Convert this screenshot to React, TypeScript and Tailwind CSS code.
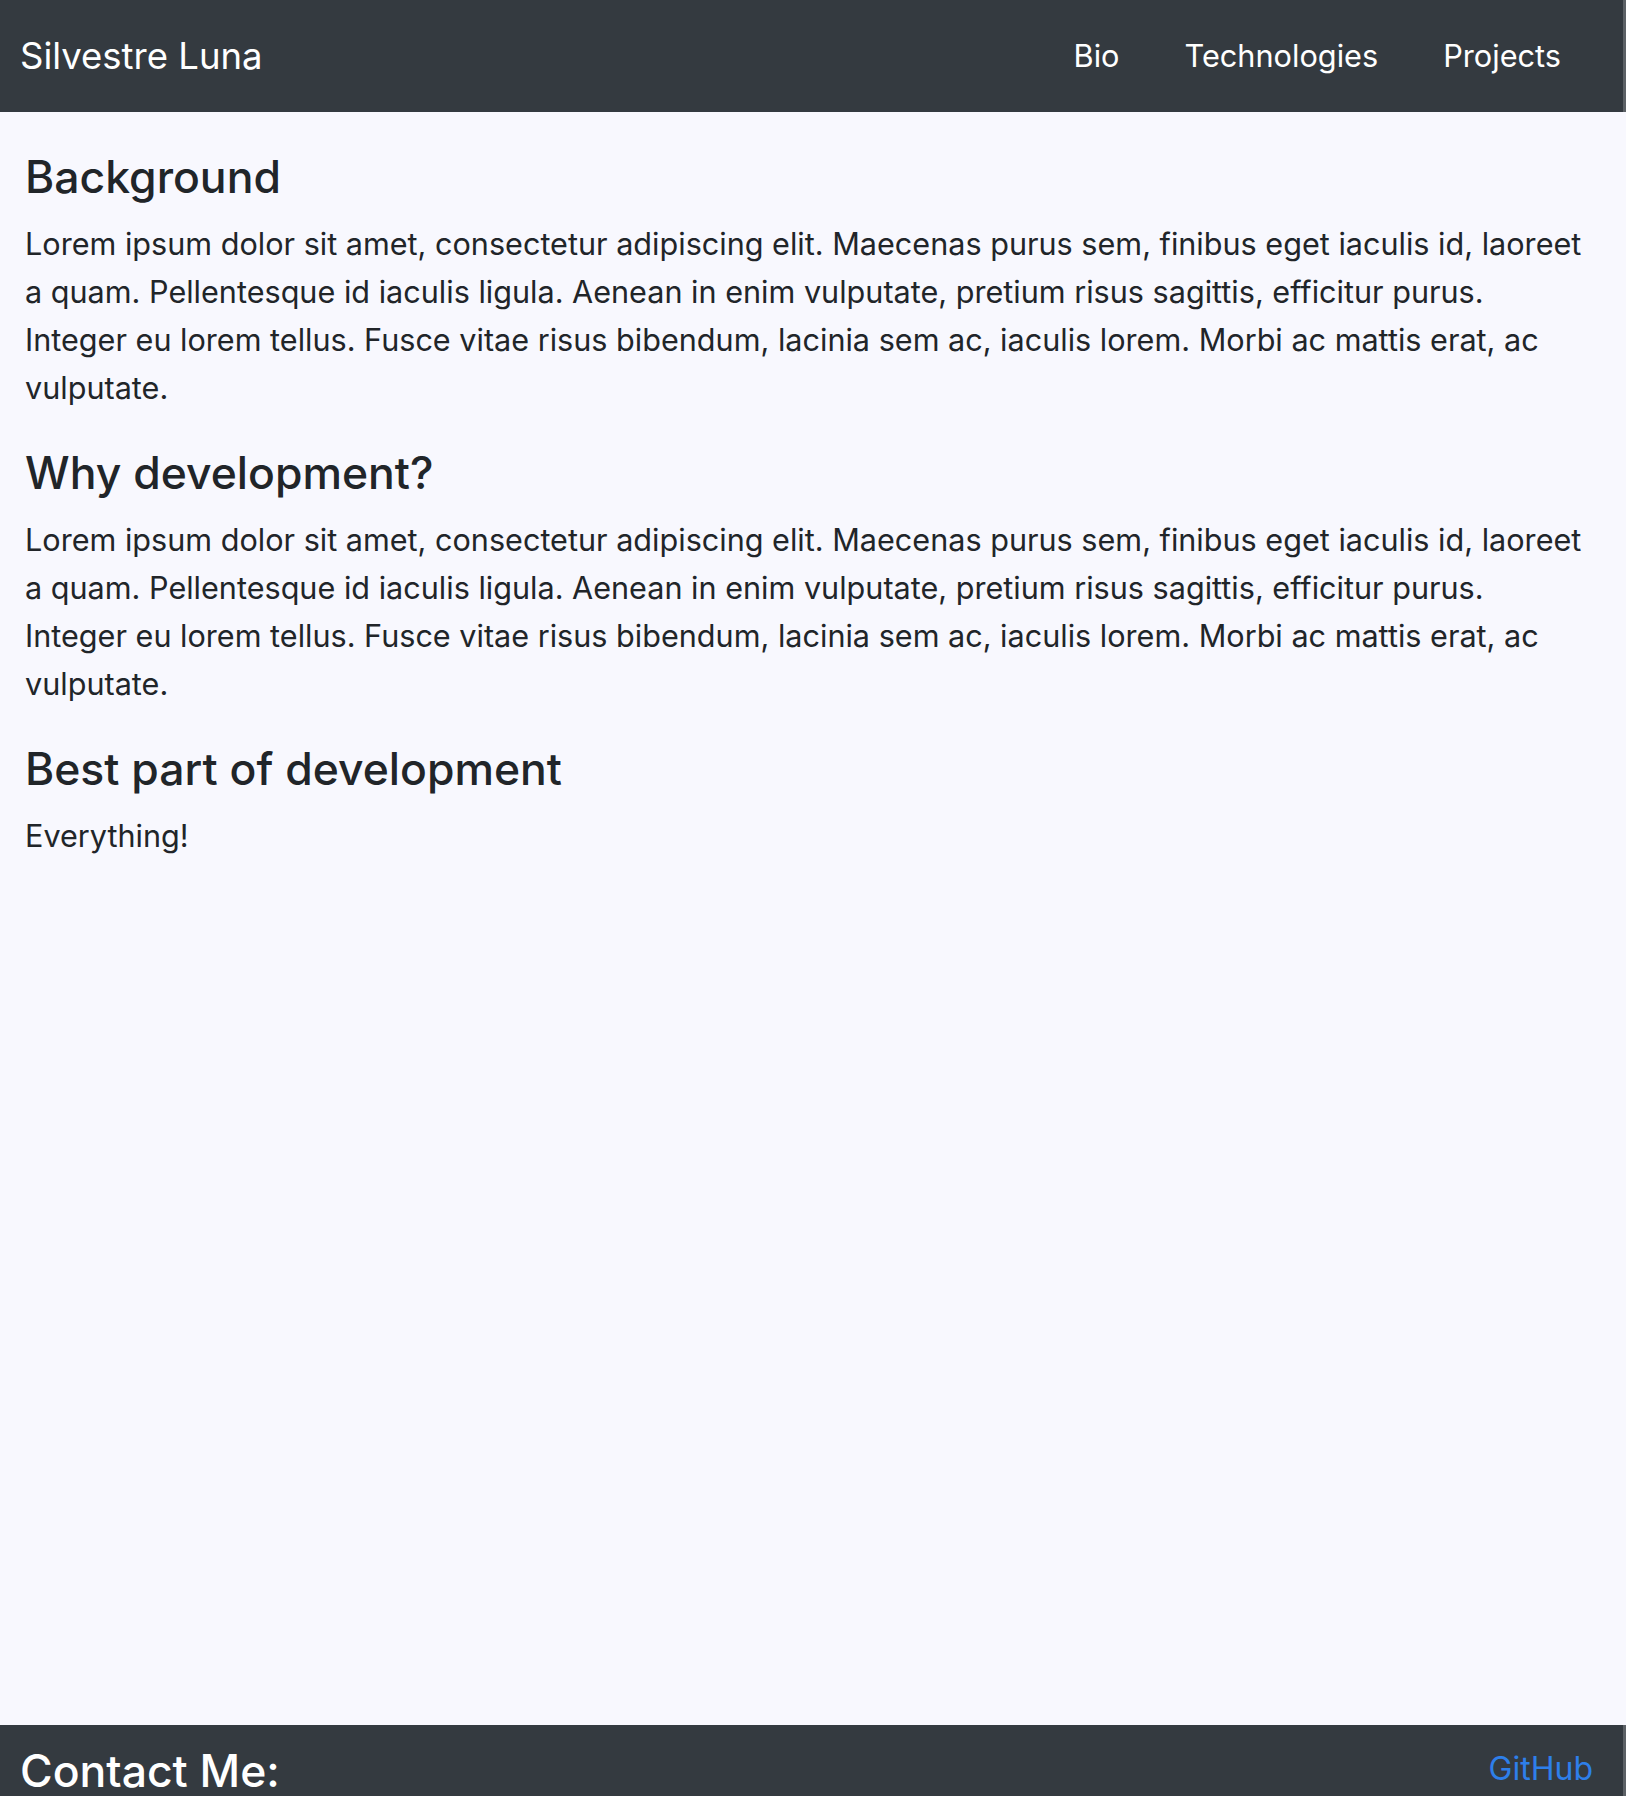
import React from 'react';

const lorem =
  'Lorem ipsum dolor sit amet, consectetur adipiscing elit. Maecenas purus sem, finibus eget iaculis id, laoreet a quam. Pellentesque id iaculis ligula. Aenean in enim vulputate, pretium risus sagittis, efficitur purus. Integer eu lorem tellus. Fusce vitae risus bibendum, lacinia sem ac, iaculis lorem. Morbi ac mattis erat, ac vulputate.';

const sections = [
  { title: 'Background', body: lorem },
  { title: 'Why development?', body: lorem },
  { title: 'Best part of development', body: 'Everything!' },
];

const App: React.FC = () => {
  return (
    <div className="h-[1796px] overflow-hidden flex flex-col bg-[#f8f8fe] text-[#212529] font-['Inter','Liberation_Sans',sans-serif]">
      <nav className="h-[112px] shrink-0 bg-[#343a40] border-r-[3px] border-[#5c6166] flex items-center justify-between pl-[20px] pr-[62px]">
        <a href="#" className="text-[36.5px] leading-none text-white">
          Silvestre Luna
        </a>
        <ul className="flex items-center gap-[65px] text-[30.7px] leading-none text-white">
          <li><a href="#">Bio</a></li>
          <li><a href="#">Technologies</a></li>
          <li><a href="#">Projects</a></li>
        </ul>
      </nav>

      <main className="flex-1 pl-[25px] pr-[39px] pt-[39px]">
        {sections.map((s) => (
          <section key={s.title}>
            <h4 className="text-[44.5px] leading-[53px] font-medium mb-[16px]">{s.title}</h4>
            <p className="text-[30.6px] leading-[48px] mb-[35px]">{s.body}</p>
          </section>
        ))}
      </main>

      <footer className="h-[71px] shrink-0 overflow-hidden bg-[#343a40] border-r-[3px] border-[#5c6166] flex items-start justify-between pl-[20px] pr-[30px] pt-[20px]">
        <h4 className="text-[44.5px] leading-[53px] font-medium text-white">Contact Me:</h4>
        <a href="#" className="text-[32px] leading-[48px] text-[#2e7fea]">
          GitHub
        </a>
      </footer>
    </div>
  );
};

export default App;
